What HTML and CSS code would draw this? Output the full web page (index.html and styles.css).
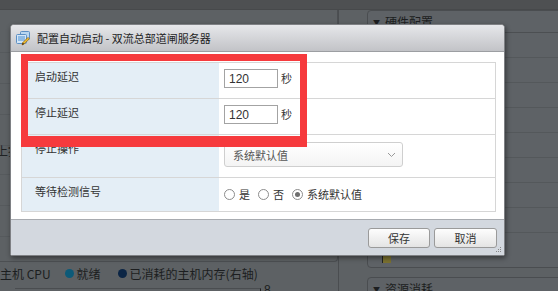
FILE: index.html
```html
<!DOCTYPE html>
<html lang="zh-CN">

<head>
    <meta charset="UTF-8">
    <title>配置自动启动</title>
    <link rel="stylesheet" href="styles.css">
</head>

<body>
    <div class="page">
        <div class="topbar"></div>

        <div class="workspace">
            <div class="main-col">
                <div class="main-panel">
                    <div class="bg-row"></div>
                    <div class="bg-row"></div>
                    <div class="bg-row"></div>
                    <div class="bg-row"></div>
                    <div class="bg-row"><span class="bg-label">上拔</span></div>
                    <div class="bg-row"></div>
                    <div class="bg-row"></div>
                </div>
                <div class="legend">
                    <span>主机 CPU</span>
                    <span class="dot teal"></span><span>就绪</span>
                    <span class="dot navy"></span><span>已消耗的主机内存(右轴)</span>
                </div>
                <div class="axis">
                    <div class="axis-line"></div>
                    <span class="axis-num">8</span>
                </div>
            </div>

            <div class="side-col">
                <div class="side-panel hw">
                    <div class="side-head"><span class="tri">▼</span>硬件配置</div>
                    <div class="side-row"></div>
                    <div class="side-row"></div>
                    <div class="side-row"></div>
                    <div class="side-row"></div>
                    <div class="side-row"></div>
                    <div class="side-row"></div>
                    <div class="side-row"></div>
                    <div class="side-row"></div>
                    <div class="side-item"><span class="side-icon"></span></div>
                </div>
                <div class="side-panel res">
                    <div class="side-head"><span class="tri">▼</span>资源消耗</div>
                </div>
            </div>
        </div>

        <!-- modal dialog -->
        <div class="dialog">
            <div class="dialog-title">
                <svg class="title-icon" width="14" height="15" viewBox="0 0 14 15">
                    <rect x="4.5" y="0.5" width="9" height="8" rx="1" fill="#b9d6f0" stroke="#5b8fc4" />
                    <rect x="0.5" y="3.5" width="10" height="9" rx="1" fill="#d4e6f7" stroke="#5b8fc4" />
                    <rect x="2" y="5" width="7" height="5" fill="#8fbbe4" />
                    <path d="M6 14 L6.8 11.6 L12 6.4 L13.4 7.8 L8.2 13 Z" fill="#f0c030" stroke="#8a5a12" stroke-width="0.7" />
                    <path d="M6 14 L6.8 11.6 L8.2 13 Z" fill="#4a300c" />
                </svg>
                <span>配置自动启动 - 双流总部道闸服务器</span>
            </div>

            <div class="dialog-body">
                <div class="form-table">
                    <div class="form-row r1">
                        <div class="form-label">启动延迟</div>
                        <div class="form-value">
                            <input class="num" type="text" value="120"><span class="unit">秒</span>
                        </div>
                    </div>
                    <div class="form-row r2">
                        <div class="form-label">停止延迟</div>
                        <div class="form-value">
                            <input class="num" type="text" value="120"><span class="unit">秒</span>
                        </div>
                    </div>
                    <div class="form-row r3">
                        <div class="form-label">停止操作</div>
                        <div class="form-value">
                            <div class="select">
                                <span>系统默认值</span>
                                <svg width="9" height="6" viewBox="0 0 9 6">
                                    <path d="M1 1 L4.5 4.5 L8 1" fill="none" stroke="#999" stroke-width="1" />
                                </svg>
                            </div>
                        </div>
                    </div>
                    <div class="form-row r4">
                        <div class="form-label">等待检测信号</div>
                        <div class="form-value radios">
                            <span class="radio"></span><span class="radio-text">是</span>
                            <span class="radio"></span><span class="radio-text">否</span>
                            <span class="radio checked"></span><span class="radio-text">系统默认值</span>
                        </div>
                    </div>
                </div>
            </div>

            <div class="dialog-footer">
                <button class="btn">保存</button>
                <button class="btn wide">取消</button>
            </div>

            <svg class="grip" width="7" height="7" viewBox="0 0 7 7">
                <rect x="5" y="1" width="1" height="1" fill="#888" />
                <rect x="3" y="3" width="1" height="1" fill="#888" />
                <rect x="5" y="3" width="1" height="1" fill="#888" />
                <rect x="1" y="5" width="1" height="1" fill="#888" />
                <rect x="3" y="5" width="1" height="1" fill="#888" />
                <rect x="5" y="5" width="1" height="1" fill="#888" />
            </svg>
        </div>

        <!-- red annotation frame -->
        <div class="mark"></div>
    </div>
</body>

</html>
```

FILE: styles.css
```css
/* page behind the modal (already dimmed) */
body {
    margin: 0;
    font-family: "Noto Sans CJK SC", "Liberation Sans", sans-serif;
    background-color: #5d6164;
}

.page {
    position: relative;
    width: 558px;
    height: 291px;
    overflow: hidden;
    background-color: #5d6164;
}

.topbar {
    height: 9px;
    background-color: #4e5052;
    border-bottom: 1px solid #47494b;
}

.workspace {
    display: flex;
}

.main-col {
    width: 338px;
    border-right: 1px solid #4a4d50;
    flex-shrink: 0;
}

.main-panel {
    height: 252px;
    border-right: 1px solid #4c4f52;
    border-bottom: 1px solid #4c4f52;
    border-radius: 0 0 4px 0;
    padding-top: 12px;
    box-sizing: border-box;
}

.bg-row {
    height: 30px;
    border-bottom: 1px solid #565a5d;
}

.bg-label {
    display: block;
    margin: -2px 0 0 -4px;
    line-height: 14px;
    font-size: 12px;
    color: #1f2224;
}

.legend {
    display: flex;
    align-items: center;
    height: 22px;
    font-size: 12px;
    color: #1c1e20;
    white-space: nowrap;
}

.legend .dot {
    width: 9px;
    height: 9px;
    border-radius: 50%;
    margin: 0 3px 0 14px;
}

.dot.teal {
    background-color: #0d5a78;
}

.dot.navy {
    background-color: #0b2545;
    margin-left: 17px;
}

.axis {
    display: flex;
    align-items: flex-start;
    padding-left: 15px;
}

.axis-line {
    width: 245px;
    height: 4px;
    margin-top: 4px;
    border-top: 1px solid #4a4d50;
    border-right: 1px solid #222;
}

.axis-num {
    font-family: "Liberation Sans", sans-serif;
    font-size: 12px;
    color: #1c1e20;
    margin-left: 3px;
    line-height: 12px;
}

.side-col {
    margin-left: 28px;
}

.side-panel {
    width: 220px;
    border: 1px solid #4a4d50;
    border-radius: 4px;
    background-color: #5e6266;
}

.side-panel.hw {
    height: 258px;
    box-sizing: border-box;
}

.side-panel.res {
    margin-top: 9px;
    height: 40px;
}

.side-head {
    height: 21px;
    line-height: 21px;
    font-size: 12px;
    color: #1c1e20;
    padding-left: 5px;
    border-bottom: 1px solid #4c4f52;
}

.tri {
    font-size: 7px;
    margin-right: 5px;
    vertical-align: 2px;
}

.side-row {
    height: 24px;
    border-bottom: 1px solid #54585b;
}

.side-item {
    display: flex;
    align-items: flex-end;
    height: 30px;
    padding-left: 14px;
}

.side-icon {
    width: 8px;
    height: 7px;
    background-color: #7a7030;
    border-left: 1px solid #222;
}

/* dialog */
.dialog {
    position: absolute;
    left: 10px;
    top: 24px;
    width: 495px;
    height: 232px;
    box-sizing: border-box;
    border: 1px solid #7e8084;
    border-radius: 4px 4px 2px 2px;
    background-color: white;
    box-shadow: 1px 2px 5px rgba(0, 0, 0, 0.45);
    display: flex;
    flex-direction: column;
    overflow: hidden;
}

.dialog-title {
    height: 26px;
    display: flex;
    align-items: center;
    padding-left: 5px;
    background: linear-gradient(#e6e7ea, #c2c3c7);
    border-bottom: 1px solid #9c9ea2;
    font-size: 11px;
    color: #1e1e1e;
}

.title-icon {
    margin-right: 7px;
}

.dialog-body {
    padding: 10px 8px 7px 10px;
}

.form-table {
    border: 1px solid #d6d6d6;
}

.form-row {
    display: grid;
    grid-template-columns: 197px 1fr;
    border-top: 1px solid #d6d6d6;
}

.form-row.r1 {
    border-top: none;
    height: 35px;
}

.form-row.r2 {
    height: 35px;
}

.form-row.r3 {
    height: 42px;
}

.form-row.r4 {
    height: 33px;
}

.form-label {
    background-color: #e4eef6;
    font-size: 11px;
    color: #333;
    padding: 5px 0 0 13px;
}

.form-value {
    display: flex;
    align-items: flex-start;
    padding: 6px 0 0 5px;
    font-size: 11px;
    color: #333;
}

.num {
    width: 54px;
    height: 19px;
    box-sizing: border-box;
    border: 1px solid #a3a3a3;
    padding: 0 4px;
    font-family: "Liberation Sans", sans-serif;
    font-size: 12px;
    color: #333;
    outline: none;
}

.unit {
    margin-left: 3px;
    line-height: 19px;
}

.select {
    width: 179px;
    height: 25px;
    box-sizing: border-box;
    margin-top: 1px;
    border: 1px solid #cfcfcf;
    border-radius: 3px;
    background: linear-gradient(#fff, #f4f4f4);
    display: flex;
    align-items: center;
    justify-content: space-between;
    padding: 0 6px 0 8px;
    color: #555;
}

.radios {
    align-items: center;
    padding-top: 9px;
    height: 14px;
}

.radio {
    width: 11px;
    height: 11px;
    box-sizing: border-box;
    border: 1px solid #8c8c8c;
    border-radius: 50%;
    background: white;
    margin-right: 4px;
    position: relative;
}

.radio.checked::after {
    content: "";
    position: absolute;
    left: 2px;
    top: 2px;
    width: 5px;
    height: 5px;
    border-radius: 50%;
    background-color: #6e6e6e;
}

.radio-text {
    margin-right: 8px;
}

.dialog-footer {
    flex: 1;
    border-top: 1px solid #a8abb0;
    background-color: #d3d8df;
    display: flex;
    justify-content: flex-end;
    align-items: flex-start;
    gap: 4px;
    padding: 8px 7px 0 0;
}

.btn {
    width: 62px;
    height: 20px;
    padding: 0;
    font-family: "Noto Sans CJK SC", sans-serif;
    font-size: 11px;
    color: #333;
    border: 1px solid #9a9a9a;
    border-radius: 3px;
    background: linear-gradient(#fdfdfd, #e4e4e4);
}

.btn.wide {
    width: 63px;
}

.grip {
    position: absolute;
    right: 2px;
    bottom: 2px;
}

/* red annotation */
.mark {
    position: absolute;
    left: 21px;
    top: 54px;
    width: 286px;
    height: 93px;
    box-sizing: border-box;
    border: 7px solid #f63a3d;
    border-bottom-width: 11px;
}
```
